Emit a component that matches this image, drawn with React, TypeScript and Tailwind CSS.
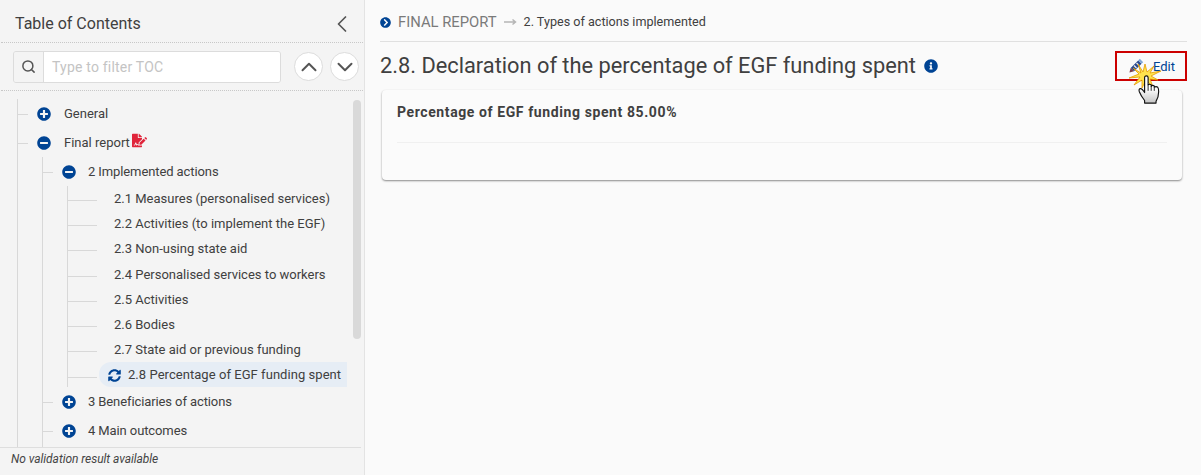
import React from 'react';
import { ChevronDown, ChevronLeft, ChevronUp, Search } from 'lucide-react';
import {
  FaChevronCircleRight,
  FaFileSignature,
  FaInfoCircle,
  FaMinusCircle,
  FaPlusCircle,
  FaSyncAlt,
} from 'react-icons/fa';

const leaves = [
  { label: '2.1 Measures (personalised services)', h: 'h-[25px]' },
  { label: '2.2 Activities (to implement the EGF)', h: 'h-[25px]' },
  { label: '2.3 Non-using state aid', h: 'h-[25px]' },
  { label: '2.4 Personalised services to workers', h: 'h-[26px]' },
  { label: '2.5 Activities', h: 'h-[25px]' },
  { label: '2.6 Bodies', h: 'h-[25px]' },
  { label: '2.7 State aid or previous funding', h: 'h-[25px]' },
];

const Branch: React.FC<{ open?: boolean; label: string; labelClass: string; children?: React.ReactNode }> = ({
  open,
  label,
  labelClass,
  children,
}) => (
  <div className="flex items-center h-[29px]">
    <span className="w-[10px] h-px shrink-0 bg-[#d8d8d8] mt-[2px]" />
    <span className="ml-[9px] w-[14px] shrink-0 flex justify-center text-[#004494] text-[14px]">
      {open ? <FaMinusCircle /> : <FaPlusCircle />}
    </span>
    <span className={`${labelClass} text-[13px] leading-none whitespace-nowrap`}>{label}</span>
    {children}
  </div>
);

const Leaf: React.FC<{ label: string; h: string }> = ({ label, h }) => (
  <div className={`flex items-center ${h}`}>
    <span className="w-[29px] h-px shrink-0 bg-[#d8d8d8] mt-[4px]" />
    <span className="ml-[17px] text-[13px] leading-none whitespace-nowrap">{label}</span>
  </div>
);

const Sidebar: React.FC = () => (
  <aside className="relative w-[365px] h-full shrink-0 flex flex-col bg-[#f4f4f4] border-r border-[#e3e3e3] text-[#404040]">
    <div className="flex items-center justify-between h-[43px] mx-px pl-[14px] pr-[7px] pt-[5px] border-b border-dotted border-[#c8c8c8]">
      <h2 className="text-[16px] leading-none">Table of Contents</h2>
      <ChevronLeft size={28} strokeWidth={1.5} className="text-[#555]" />
    </div>
    <div className="flex items-center h-[48px] mx-px pl-[12px] border-b border-dotted border-[#c8c8c8]">
      <div className="flex w-[268px] h-[32px] rounded-[3px] border border-[#dcdcdc] overflow-hidden">
        <span className="w-[30px] flex items-center justify-center border-r border-[#dcdcdc] bg-[#f4f4f4]">
          <Search size={15} strokeWidth={2.4} className="text-[#555]" />
        </span>
        <span className="flex-1 bg-white pl-[8px] text-[14px] leading-[30px] text-[#c4c4c4] tracking-[0.2px]">
          Type to filter TOC
        </span>
      </div>
      <span className="ml-[13px] w-[29px] h-[29px] rounded-full border border-[#dcdcdc] bg-white flex items-center justify-center">
        <ChevronUp size={26} strokeWidth={1.8} className="text-[#555] shrink-0" />
      </span>
      <span className="ml-[7px] w-[29px] h-[29px] rounded-full border border-[#dcdcdc] bg-white flex items-center justify-center">
        <ChevronDown size={26} strokeWidth={1.8} className="text-[#555] shrink-0" />
      </span>
    </div>

    <div className="relative flex-1 overflow-hidden pt-[8px] pl-[17px]">
      <div className="border-l border-[#d8d8d8] h-[400px]">
        <Branch label="General" labelClass="ml-[13px]" />
        <Branch open label="Final report" labelClass="ml-[13px]">
          <FaFileSignature className="ml-[2px] mb-[4px] text-[15px] text-[#e0243a]" />
        </Branch>
        <div className="ml-[24px] border-l border-[#d8d8d8] h-[300px]">
          <Branch open label="2 Implemented actions" labelClass="ml-[12px] tracking-[-0.1px]" />
          <div className="ml-[24px] w-[280px] border-l border-[#d8d8d8]">
            {leaves.map((leaf) => (
              <Leaf key={leaf.label} label={leaf.label} h={leaf.h} />
            ))}
            <div className="flex items-center h-[25px]">
              <span className="w-[29px] h-px shrink-0 bg-[#d8d8d8] mt-[5px]" />
              <div className="ml-[2px] h-[25px] w-[248px] shrink-0 flex items-center rounded-l-[12px] bg-[#e6edf5] pl-[9px]">
                <FaSyncAlt className="text-[13px] text-[#004494] mt-[2px] shrink-0" />
                <span className="ml-[7px] text-[13px] leading-none tracking-[0.05px] whitespace-nowrap">
                  2.8 Percentage of EGF funding spent
                </span>
              </div>
            </div>
          </div>
          <Branch label="3 Beneficiaries of actions" labelClass="ml-[12px] tracking-[-0.1px]" />
          <Branch label="4 Main outcomes" labelClass="ml-[12px] tracking-[-0.1px]" />
        </div>
      </div>
      <div className="absolute left-[353px] top-[9px] w-[8px] h-[239px] rounded-[4px] bg-[#d9d9d9]" />
    </div>

    <div className="h-[28px] mr-[3px] border-t border-[#dedede] pl-[11px] text-[12px] leading-[23px] italic text-[#444] tracking-[-0.05px]">
      No validation result available
    </div>
  </aside>
);

const EditHighlight: React.FC = () => (
  <div className="relative w-[72px] h-[30px] border-2 border-[#cc0000] flex items-center pl-[36px] text-[13px] text-[#004494] leading-none">
    Edit
    <svg className="absolute left-[12px] top-[5px]" width="15" height="15" viewBox="0 0 18 18">
      <path d="M2 12 L11 3 L15 7 L6 16 Z" fill="#2b4a8f" />
      <path d="M11 3 L13 1 L17 5 L15 7 Z" fill="#7fa6d8" />
      <path d="M6 9 L9 12 M9 6 L12 9" stroke="#e4eaf2" strokeWidth="1.500" />
      <path d="M2 12 L6 16 L0.5 17.500 Z" fill="#7a3b4a" />
    </svg>
    <svg className="absolute left-[12px] top-[11px] overflow-visible" width="32" height="24" viewBox="0 0 32 24">
      <polygon
        points="16,0 18,8 25,2 21,9 32,7 22,12 29,16 21,15 24,23 17,16 13,24 13,16 5,21 11,13 0,14 10,10 4,4 12,9 9,0 14,8"
        fill="#ffe34d"
        stroke="#e59a00"
        strokeWidth="0.800"
      />
    </svg>
    <svg className="absolute left-[20px] top-[22px] overflow-visible" width="24" height="29" viewBox="0 0 24 33">
      <defs>
        <linearGradient id="handFill" x1="0" y1="0" x2="0" y2="1">
          <stop offset="0.45" stopColor="#ffffff" />
          <stop offset="1" stopColor="#c4c4c4" />
        </linearGradient>
      </defs>
      <path
        d="M7 16 L7 3 Q7 1 9 1 Q11 1 11 3 L11 11 Q13 10 14.500 11 L14.500 13 Q16 11 18 12.500 L18 14 Q20 12.500 22 14 Q23 15 23 19 Q23 25 20 30 L20 32 L7 32 L7 29 Q3 24 1 19 Q0 16 2 15.500 Q4 15 7 20 Z"
        fill="url(#handFill)"
        stroke="#111"
        strokeWidth="1.300"
        strokeLinejoin="round"
      />
      <path d="M11 11 L11 18 M14.500 13 L14.500 18 M18 14 L18 18" stroke="#111" strokeWidth="1" />
    </svg>
  </div>
);

export default function App() {
  return (
    <div className="w-[1201px] h-[475px] flex overflow-hidden bg-[#fafafa] font-['Roboto',sans-serif]">
      <Sidebar />
      <main className="flex-1 min-w-0 pl-[15px] pr-[14px] text-[#404040]">
        <div className="flex items-center h-[42px] pt-[3px] border-b border-[#e0e0e0] leading-none">
          <FaChevronCircleRight className="text-[11px] text-[#004494]" />
          <span className="ml-[7px] text-[14.8px] text-[#7a7a7a]">FINAL REPORT</span>
          <svg className="ml-[7px]" width="13" height="8" viewBox="0 0 13 8">
            <path d="M0 4 H11 M8.500 1.500 L11.500 4 L8.500 6.500" fill="none" stroke="#b5b5b5" strokeWidth="1.500" />
          </svg>
          <span className="ml-[7px] text-[12.6px]">2. Types of actions implemented</span>
        </div>
        <div className="flex items-start justify-between h-[48px]">
          <div className="flex items-center h-[47px]">
            <h1 className="text-[21.8px] leading-none">
              2.8. Declaration of the percentage of EGF funding spent
            </h1>
            <FaInfoCircle className="ml-[8px] text-[14px] text-[#004494]" />
          </div>
          <div className="mt-[9px]">
            <EditHighlight />
          </div>
        </div>
        <section className="ml-[2px] mr-[5px] h-[90px] rounded-[4px] bg-[#fbfbfb] shadow-[0_1px_2px_rgba(0,0,0,0.45)] px-[15px]">
          <div className="h-[53px] border-b border-[#f0f0f0] pt-[14px] text-[14px] leading-[16px] font-bold tracking-[0.6px]">
            Percentage of EGF funding spent 85.00%
          </div>
        </section>
      </main>
    </div>
  );
}
